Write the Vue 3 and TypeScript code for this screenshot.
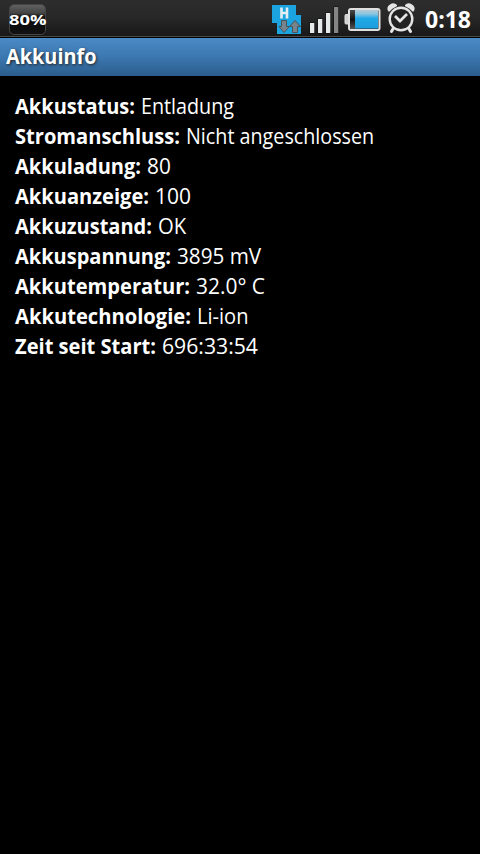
<script setup lang="ts">
interface InfoRow {
  label: string
  labelWidth: number
  value: string
  valueWidth: number
}

const rows: InfoRow[] = [
  { label: 'Akkustatus:', labelWidth: 120, value: 'Entladung', valueWidth: 93 },
  { label: 'Stromanschluss:', labelWidth: 165, value: 'Nicht angeschlossen', valueWidth: 188.2 },
  { label: 'Akkuladung:', labelWidth: 126, value: '80', valueWidth: 23.8 },
  { label: 'Akkuanzeige:', labelWidth: 134, value: '100', valueWidth: 36 },
  { label: 'Akkuzustand:', labelWidth: 137, value: 'OK', valueWidth: 28.2 },
  { label: 'Akkuspannung:', labelWidth: 156, value: '3895 mV', valueWidth: 84.2 },
  { label: 'Akkutemperatur:', labelWidth: 175, value: '32.0° C', valueWidth: 69 },
  { label: 'Akkutechnologie:', labelWidth: 176, value: 'Li-ion', valueWidth: 51.5 },
  { label: 'Zeit seit Start:', labelWidth: 141, value: '696:33:54', valueWidth: 96 },
]
</script>

<template>
  <div class="screen">
    <header class="status">
      <div class="badge">
        <svg class="level" width="37" height="29">
          <text x="-1" y="20" textLength="37.5" lengthAdjust="spacingAndGlyphs">80%</text>
        </svg>
      </div>
      <div class="icons">
        <svg class="network" width="30" height="30" viewBox="0 0 30 30">
          <path d="M0 0H24V10H29V29H5V18H0Z" fill="#1ba4e0" />
          <path d="M9.5 2.5V13.5M15 2.5V13.5M9.5 8H15" stroke="#e3eef2" stroke-width="2.6" fill="none" />
          <path d="M9.5 15.5H14.5V21.5H17.5L12 27.5L7 21.5H9.5Z" fill="#77848b" stroke="#46545b" />
          <path d="M20.5 27.5V21.5H17.5L23 15.5L28.5 21.5H25.5V27.5Z" fill="#77848b" stroke="#46545b" />
        </svg>
        <svg class="signal" width="30" height="28" viewBox="0 0 30 28">
          <g fill="#e6e9e9" stroke="#0d0d0d" stroke-width="1" paint-order="stroke">
            <rect x="0" y="17" width="4.3" height="10" />
            <rect x="8" y="13" width="4.3" height="14" />
            <rect x="16" y="7" width="4.3" height="20" />
            <rect x="24" y="1" width="4.3" height="26" fill="#858585" />
          </g>
        </svg>
        <svg class="battery" width="38" height="25" viewBox="0 0 38 25">
          <defs>
            <linearGradient id="cell" x2="0" y2="1">
              <stop offset="0" stop-color="#b5cbd5" />
              <stop offset=".2" stop-color="#8fc6e0" />
              <stop offset=".45" stop-color="#20a9e7" />
              <stop offset="1" stop-color="#1b9edb" />
            </linearGradient>
            <linearGradient id="empty" x2="0" y2="1">
              <stop stop-color="#4a4a4a" />
              <stop offset=".5" stop-color="#111" />
              <stop offset="1" stop-color="#555" />
            </linearGradient>
          </defs>
          <path d="M5 7.5H2Q1 7.5 1 8.5V16Q1 17 2 17H5" fill="#d0d0d0" stroke="#e0e0e0" />
          <rect x="5" y="2" width="30.5" height="21" rx="2" fill="#333" stroke="#e0e0e0" stroke-width="2" />
          <rect x="6" y="3" width="5" height="19" fill="url(#empty)" />
          <rect x="11" y="3" width="23" height="18.5" fill="url(#cell)" />
        </svg>
        <svg class="alarm" width="28" height="30" viewBox="0 0 28 30">
          <path d="M1 8Q-1 4 3 1.5Q7-1 10 2Q10.5 3.5 8.5 4Q5 5.5 3 8Q2 9 1 8ZM27 8Q29 4 25 1.5Q21-1 18 2Q17.5 3.5 19.5 4Q23 5.5 25 8Q26 9 27 8Z" fill="#e5e5e5" />
          <path d="M6.5 25L4.5 28.5M21.5 25L23.5 28.5" stroke="#e5e5e5" stroke-width="3" stroke-linecap="round" />
          <circle cx="14" cy="16" r="11.3" fill="#222" stroke="#e5e5e5" stroke-width="2.4" />
          <path d="M8 13L13 18L20 11" fill="none" stroke="#e5e5e5" stroke-width="2.8" />
        </svg>
      </div>
      <span class="clock">0:18</span>
    </header>
    <h1 class="title">
      <svg class="text bold" width="94" height="38">
        <text x="0" y="26" textLength="90.5" lengthAdjust="spacingAndGlyphs">Akkuinfo</text>
      </svg>
    </h1>
    <main class="info">
      <p v-for="row in rows" :key="row.label" class="row">
        <svg class="text bold" :width="row.labelWidth" height="30">
          <text x="0" y="23" :textLength="row.labelWidth" lengthAdjust="spacingAndGlyphs">{{ row.label }}</text>
        </svg>
        <svg class="text" :width="row.valueWidth" height="30">
          <text x="0" y="23" :textLength="row.valueWidth" lengthAdjust="spacingAndGlyphs">{{ row.value }}</text>
        </svg>
      </p>
    </main>
  </div>
</template>

<style>
body {
  background: #000;
}
</style>

<style scoped>
.screen {
  width: 480px;
  height: 854px;
  overflow: hidden;
  background: #000;
  color: #fff;
  font-family: "Open Sans", "Noto Sans", sans-serif;
}
.status {
  box-sizing: border-box;
  display: flex;
  align-items: flex-start;
  height: 38px;
  background: linear-gradient(#2d2d2d, #282828 45%, #191919 95%);
  border-bottom: 1px solid #000;
  box-shadow: inset 0 -1px #4b4b48;
}
.badge {
  box-sizing: border-box;
  width: 37px;
  height: 31px;
  margin: 4px 0 0 9px;
  border: 1px solid #444;
  border-radius: 5px;
  background: linear-gradient(#606060, #444 28%, #0c0c0c 42%, #111);
}
.level {
  display: block;
  overflow: visible;
  fill: #fff;
  font-size: 15px;
  font-weight: 700;
}
.icons {
  display: flex;
  align-items: flex-start;
  margin-left: auto;
}
.network { margin-top: 5px; }
.signal { margin: 6px 0 0 8px; overflow: visible; }
.battery { margin: 7px 0 0 4px; }
.alarm { margin: 3px 0 0 5px; overflow: visible; }
.clock {
  width: 46px;
  margin: 2px 9px 0 10px;
  font-size: 23px;
  font-weight: 700;
  line-height: 34px;
  white-space: nowrap;
}
.title {
  height: 38px;
  margin: 0;
  padding-left: 6px;
  background: linear-gradient(#4a8ac6, #3c77b0 50%, #2b5d8c);
  text-shadow: 1px 1px 3px #222;
}
.info {
  padding: 15px;
}
.row {
  display: flex;
  gap: 6px;
  height: 30px;
  margin: 0;
}
.text {
  display: block;
  overflow: visible;
  fill: #fff;
  font-size: 22px;
  font-weight: 400;
}
.bold {
  font-weight: 700;
}
</style>
